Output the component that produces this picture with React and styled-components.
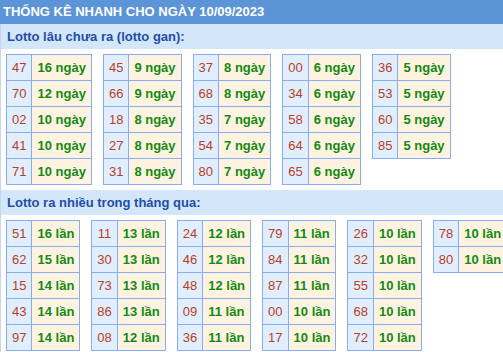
import React from "react";
import styled, { createGlobalStyle } from "styled-components";

const GlobalStyle = createGlobalStyle`
	html, body {
		margin: 0;
		padding: 0;
		background: #fff;
		overflow: hidden;
	}
	body {
		font-family: "Liberation Sans", Arial, sans-serif;
	}
`;

const Box = styled.div`
	width: 100%;
`;

const Title = styled.div`
	height: 24px;
	line-height: 23px;
	padding-left: 3px;
	background: #5b94d7;
	color: #fff;
	font-size: 13px;
	font-weight: bold;
	white-space: nowrap;
`;

const Body = styled.div`
	border-left: 1px solid #c3d6ee;
	padding-bottom: 5px;
`;

const Band = styled.div`
	height: 25px;
	line-height: 25px;
	padding-left: 6px;
	background: #d4e6fa;
	color: #1f4ea6;
	font-size: 13px;
	font-weight: bold;
`;

const Tables = styled.div`
	display: flex;
	align-items: flex-start;
	gap: 11px;
	padding: 5px 5px;
`;

const Table = styled.table`
	border-collapse: collapse;
	font-size: 13px;
	line-height: 15px;

	td {
		border: 1px solid #88aef0;
		padding: 5px;
		white-space: nowrap;
	}
`;

const Num = styled.td`
	background: #e1eefe;
	color: #b8401f;
	text-align: center;
`;

const Count = styled.td`
	background: #fef3e1;
	color: #138a13;
	font-weight: bold;
`;

const gan = [
	[["47", 16], ["70", 12], ["02", 10], ["41", 10], ["71", 10]],
	[["45", 9], ["66", 9], ["18", 8], ["27", 8], ["31", 8]],
	[["37", 8], ["68", 8], ["35", 7], ["54", 7], ["80", 7]],
	[["00", 6], ["34", 6], ["58", 6], ["64", 6], ["65", 6]],
	[["36", 5], ["53", 5], ["60", 5], ["85", 5]],
];

const nhieu = [
	[["51", 16], ["62", 15], ["15", 14], ["43", 14], ["97", 14]],
	[["11", 13], ["30", 13], ["73", 13], ["86", 13], ["08", 12]],
	[["24", 12], ["46", 12], ["48", 12], ["09", 11], ["36", 11]],
	[["79", 11], ["84", 11], ["87", 11], ["00", 10], ["17", 10]],
	[["26", 10], ["32", 10], ["55", 10], ["68", 10], ["72", 10]],
	[["78", 10], ["80", 10]],
];

const Group = ({ cols, unit }) => (
	<Tables>
		{cols.map((rows, i) => (
			<Table key={i}>
				<tbody>
					{rows.map(([n, c]) => (
						<tr key={n}>
							<Num>{n}</Num>
							<Count>
								{c} {unit}
							</Count>
						</tr>
					))}
				</tbody>
			</Table>
		))}
	</Tables>
);

const App = () => {
	return (
		<Box>
			<GlobalStyle />
			<Title>THỐNG KÊ NHANH CHO NGÀY 10/09/2023</Title>
			<Body>
				<Band>Lotto lâu chưa ra (lotto gan):</Band>
				<Group cols={gan} unit="ngày" />
				<Band>Lotto ra nhiều trong tháng qua:</Band>
				<Group cols={nhieu} unit="lần" />
			</Body>
		</Box>
	);
};

export default App;
